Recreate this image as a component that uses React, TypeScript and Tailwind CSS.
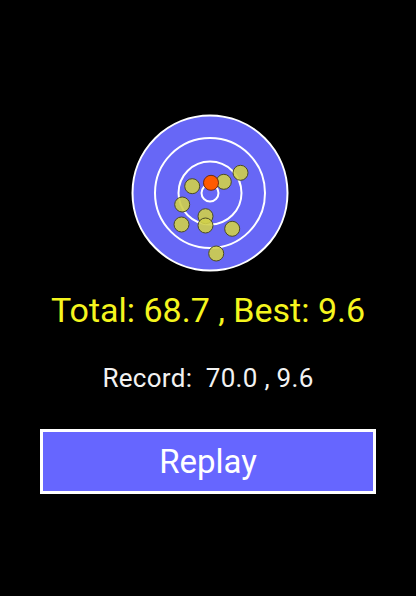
import React from 'react';

const shots: [number, number][] = [
  [30.5, -20.2],
  [13.8, -11.2],
  [-17.8, -6.8],
  [-27.8, 11.5],
  [-28.5, 31.5],
  [-4.5, 23.2],
  [-4.5, 32.5],
  [22.2, 35.8],
  [6.2, 60.5],
];

function Target() {
  const c = 80;
  return (
    <svg width="160" height="160" viewBox="0 0 160 160">
      <circle cx={c} cy={c} r={77.5} fill="#6767f6" stroke="#ffffff" strokeWidth={2} />
      <circle cx={c} cy={c} r={55} fill="none" stroke="#ffffff" strokeWidth={2} />
      <circle cx={c} cy={c} r={31.5} fill="none" stroke="#ffffff" strokeWidth={2} />
      <circle cx={c} cy={c} r={8.5} fill="none" stroke="#ffffff" strokeWidth={2} />
      {shots.map(([x, y], i) => (
        <circle key={i} cx={c + x} cy={c + y} r={7.5} fill="#d0d04a" fillOpacity={0.9} stroke="#4a4a26" strokeWidth={1} />
      ))}
      <circle cx={c + 1} cy={c - 10.2} r={7.5} fill="#ff5a00" stroke="#6a2a10" strokeWidth={1} />
    </svg>
  );
}

export default function App() {
  return (
    <div className="w-[416px] h-[596px] bg-black flex flex-col items-center font-['Roboto',sans-serif]">
      {/* ── TARGET ── */}
      <div className="mt-[113px] ml-[3px]">
        <Target />
      </div>

      {/* ── SCORES ── */}
      <p className="mt-[17px] text-[34px] leading-[40px] text-[#f5f51e]">Total: 68.7 , Best: 9.6</p>
      <p className="mt-[33px] text-[26px] leading-[30px] tracking-[0.3px] text-[#f2f2f2] whitespace-pre">Record:  70.0 , 9.6</p>

      {/* ── REPLAY ── */}
      <button className="mt-[36px] w-[336px] h-[65px] bg-[#6666ff] border-[3px] border-white text-white text-[33px] leading-none">
        Replay
      </button>
    </div>
  );
}
